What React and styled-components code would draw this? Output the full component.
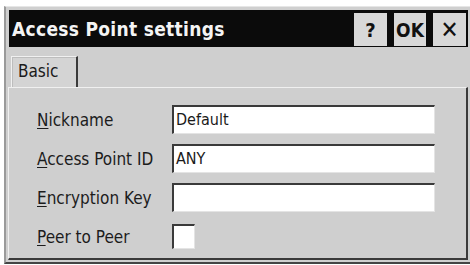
import React from "react";
import styled, { createGlobalStyle } from "styled-components";

const GlobalStyle = createGlobalStyle`
  body {
    margin: 0;
    background: #ffffff;
    font-family: "DejaVu Sans Condensed", "DejaVu Sans", sans-serif;
  }
`;

const SCWindow = styled("div")`
  width: 459px;
  height: 250px;
  margin: 6px 0 0 4px;
  padding: 3px 2px 2px 3px;
  background: #cfcfcf;
  border-top: 1px solid #e6e6e6;
  border-left: 2px solid #9a9a9a;
  border-right: 2px solid #444444;
  border-bottom: 2px solid #444444;
  display: flex;
  flex-direction: column;
`;

const SCTitleBar = styled("div")`
  height: 37px;
  background: #0b0b0b;
  display: flex;
  align-items: stretch;
  padding: 3px 2px 1px 3px;
  box-sizing: border-box;
`;

const SCTitle = styled("div")`
  flex: 1;
  color: #f4f4f4;
  font-weight: bold;
  font-size: 19px;
  line-height: 33px;
  letter-spacing: 0.3px;
`;

const SCTitleButtons = styled("div")`
  display: flex;
  gap: 7px;
`;

const SCTitleButton = styled("div")`
  width: ${props => props.w || 33}px;
  background: #d8d8d8;
  color: #111111;
  font-weight: ${props => (props.thin ? "normal" : "bold")};
  font-size: ${props => props.size || 20}px;
  display: flex;
  align-items: center;
  justify-content: center;
`;

const SCTabStrip = styled("div")`
  display: flex;
  padding: 9px 0 0 2px;
  height: 40px;
  box-sizing: border-box;
`;

const SCTab = styled("div")`
  width: 58px;
  padding-left: 6px;
  border-top: 1px solid #f0f0f0;
  border-left: 1px solid #f0f0f0;
  border-right: 2px solid #3a3a3a;
  background: #d4d4d4;
  font-size: 17px;
  line-height: 28px;
  color: #1a1a1a;
  box-shadow: inset 1px 1px 0 #bdbdbd;
`;

const SCPanel = styled("div")`
  flex: 1;
  margin: 0 0 0 -1px;
  border-top: 1px solid #f0f0f0;
  border-left: 1px solid #f0f0f0;
  border-right: 2px solid #3a3a3a;
  border-bottom: 2px solid #3a3a3a;
  padding: 17px 0 0 28px;
  display: flex;
  flex-direction: column;
  gap: 10px;
`;

const SCRow = styled("div")`
  display: flex;
  align-items: center;
  height: 29px;
`;

const SCLabel = styled("div")`
  width: 135px;
  font-size: 17px;
  color: #1c1c1c;

  u {
    text-decoration: underline;
    text-underline-offset: 2px;
  }
`;

const SCInput = styled("div")`
  width: 263px;
  height: 29px;
  box-sizing: border-box;
  background: #ffffff;
  border-top: 2px solid #3a3a3a;
  border-left: 2px solid #3a3a3a;
  border-right: 1px solid #e4e4e4;
  border-bottom: 1px solid #e4e4e4;
  padding-left: 2px;
  font-size: 16px;
  line-height: 26px;
  color: #1a1a1a;
`;

const SCCheckbox = styled("div")`
  width: 23px;
  height: 25px;
  box-sizing: border-box;
  background: #ffffff;
  border-top: 2px solid #3a3a3a;
  border-left: 2px solid #3a3a3a;
  border-right: 1px solid #e4e4e4;
  border-bottom: 1px solid #e4e4e4;
`;

const Field = ({ access, rest, children }) => (
  <SCRow>
    <SCLabel>
      <u>{access}</u>
      {rest}
    </SCLabel>
    {children}
  </SCRow>
);

const App = () => {
  return (
    <>
      <GlobalStyle />
      <SCWindow>
        <SCTitleBar>
          <SCTitle>Access Point settings</SCTitle>
          <SCTitleButtons>
            <SCTitleButton>?</SCTitleButton>
            <SCTitleButton w={32} size={19}>OK</SCTitleButton>
            <SCTitleButton size={24} thin>✕</SCTitleButton>
          </SCTitleButtons>
        </SCTitleBar>
        <SCTabStrip>
          <SCTab>Basic</SCTab>
        </SCTabStrip>
        <SCPanel>
          <Field access="N" rest="ickname">
            <SCInput>Default</SCInput>
          </Field>
          <Field access="A" rest="ccess Point ID">
            <SCInput>ANY</SCInput>
          </Field>
          <Field access="E" rest="ncryption Key">
            <SCInput />
          </Field>
          <Field access="P" rest="eer to Peer">
            <SCCheckbox />
          </Field>
        </SCPanel>
      </SCWindow>
    </>
  );
};

export default App;
